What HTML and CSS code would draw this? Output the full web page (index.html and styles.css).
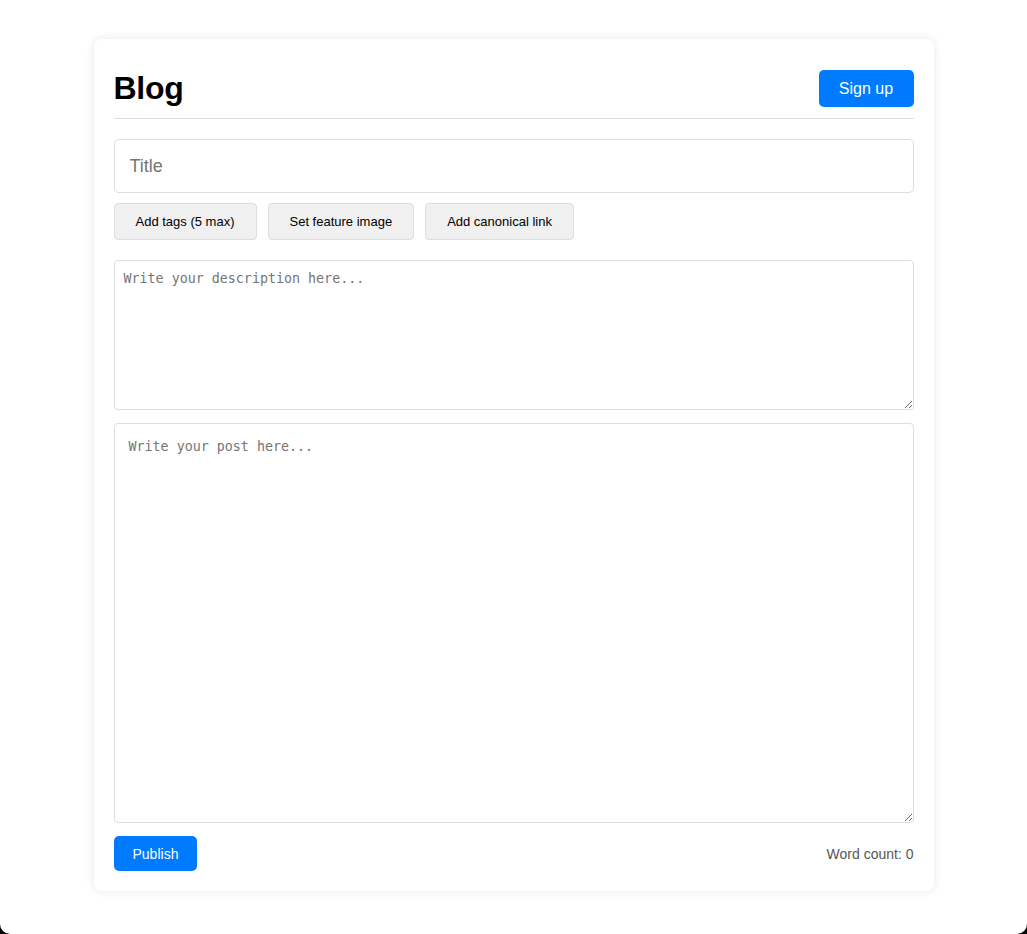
FILE: index.html
```html
<!DOCTYPE html>
<html lang="en">
<head>
<meta charset="utf-8">
<title>Blog</title>
<link rel="stylesheet" href="styles.css">
</head>
<body>
<div class="page">
  <main class="card">
    <header class="header">
      <h1 class="logo">Blog</h1>
      <button class="btn-primary btn-signup" type="button">Sign up</button>
    </header>
    <input class="title-input" type="text" placeholder="Title">
    <div class="actions">
      <button class="btn-secondary" type="button">Add tags (5 max)</button>
      <button class="btn-secondary" type="button">Set feature image</button>
      <button class="btn-secondary" type="button">Add canonical link</button>
    </div>
    <textarea class="desc" placeholder="Write your description here..."></textarea>
    <textarea class="post" placeholder="Write your post here..."></textarea>
    <footer class="footer">
      <button class="btn-primary btn-publish" type="button">Publish</button>
      <span class="word-count">Word count: 0</span>
    </footer>
  </main>
</div>
</body>
</html>
```
FILE: styles.css
```css
html {
  background: #000;
}
body {
  margin: 0;
  background: #fff;
  min-height: 934px;
  border-radius: 0 0 10px 10px;
  font-family: "Liberation Sans", Arial, sans-serif;
}
.page {
  padding-top: 39px;
}
.card {
  width: 800px;
  margin: 0 auto;
  padding: 20px;
  background: #fff;
  border-radius: 8px;
  box-shadow: 0 0 10px rgba(0, 0, 0, 0.1);
  display: flex;
  flex-direction: column;
}
.header {
  display: flex;
  justify-content: space-between;
  align-items: center;
  padding: 11px 0 11px;
  border-bottom: 1px solid #ddd;
}
.logo {
  margin: 0;
  font-size: 32px;
  line-height: 37px;
  font-weight: bold;
  color: #000;
  letter-spacing: -0.3px;
}
.btn-primary {
  background: #007bff;
  color: #fff;
  border: none;
  border-radius: 5px;
  font-family: "Liberation Sans", Arial, sans-serif;
  cursor: pointer;
}
.btn-signup {
  height: 37px;
  padding: 1px 20px 0;
  width: 95px;
  font-size: 16px;
}
.title-input {
  margin-top: 20px;
  height: 54px;
  box-sizing: border-box;
  padding: 0 15px;
  font-size: 18px;
  font-family: "Liberation Sans", Arial, sans-serif;
  border: 1px solid #ddd;
  border-radius: 5px;
  outline: none;
}
.title-input::placeholder {
  color: #757575;
}
.actions {
  display: flex;
  gap: 11px;
  margin-top: 10px;
}
.btn-secondary {
  height: 37px;
  padding: 0 21px;
  background: #f0f0f0;
  border: 1px solid #ddd;
  border-radius: 4px;
  font-size: 13px;
  font-family: "Liberation Sans", Arial, sans-serif;
  color: #000;
  cursor: pointer;
}
.desc,
.post {
  box-sizing: border-box;
  border: 1px solid #ddd;
  border-radius: 4px;
  font-family: "DejaVu Sans Mono", monospace;
  font-size: 13.333px;
  outline: none;
  width: 100%;
  display: block;
}
.desc {
  margin-top: 20px;
  height: 150px;
  padding: 10px 9px;
}
.post {
  margin-top: 13px;
  height: 400px;
  padding: 15px 14px;
}
.desc::placeholder,
.post::placeholder {
  color: #757575;
}
.footer {
  display: flex;
  justify-content: space-between;
  align-items: center;
  margin-top: 13px;
}
.btn-publish {
  height: 35px;
  padding: 0 19px;
  font-size: 14px;
}
.word-count {
  font-size: 14px;
  color: #555;
}
```
